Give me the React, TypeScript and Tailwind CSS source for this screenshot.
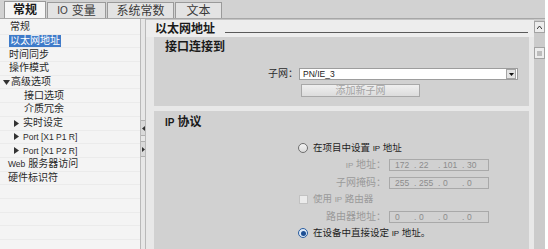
import React from "react";

type Row = {
  text: React.ReactNode;
  pad: string;
  arrow?: "down" | "right";
  selected?: boolean;
};

const rows: Row[] = [
  { text: "常规", pad: "pl-[10px]" },
  { text: "以太网地址", pad: "pl-[9px]", selected: true },
  { text: "时间同步", pad: "pl-[9px]" },
  { text: "操作模式", pad: "pl-[9px]" },
  { text: "高级选项", pad: "pl-[3px]", arrow: "down" },
  { text: "接口选项", pad: "pl-[24px]" },
  { text: "介质冗余", pad: "pl-[24px]" },
  { text: "实时设定", pad: "pl-[14px]", arrow: "right" },
  { text: <span className="text-[8.5px]">Port [X1 P1 R]</span>, pad: "pl-[14px]", arrow: "right" },
  { text: <span className="text-[8.5px]">Port [X1 P2 R]</span>, pad: "pl-[14px]", arrow: "right" },
  {
    text: (
      <>
        <span className="text-[8.5px] mr-[3px]">Web</span>服务器访问
      </>
    ),
    pad: "pl-[8px]",
  },
  { text: "硬件标识符", pad: "pl-[8px]" },
];

function Arrow({ dir }: { dir: "down" | "right" }) {
  if (dir === "down") {
    return (
      <svg width="7" height="5" viewBox="0 0 7 5" className="mr-[1px] shrink-0">
        <path d="M0 0 L7 0 L3.5 5 Z" fill="#333" />
      </svg>
    );
  }
  return (
    <svg width="5" height="7" viewBox="0 0 5 7" className="mr-[4px] shrink-0">
      <path d="M0 0 L5 3.5 L0 7 Z" fill="#333" />
    </svg>
  );
}

function Tabs() {
  const tabs = [
    { label: "常规", w: "w-[42px]", active: true },
    {
      label: (
        <>
          <span className="text-[10px] mr-[4px]">IO</span>变量
        </>
      ),
      w: "w-[59px]",
    },
    { label: "系统常数", w: "w-[67px]" },
    { label: "文本", w: "w-[47px]" },
  ];
  return (
    <div className="h-[19px] bg-[#d2d2d2] border-b border-[#a7a7a7] flex items-end pl-[4px] gap-[1px]">
      {tabs.map((t, i) => (
        <div
          key={i}
          className={`${t.w} flex items-center justify-center border border-b-0 border-[#9a9a9a] text-[12px] leading-none ${
            t.active
              ? "h-[17px] bg-[#f6f6f6] font-bold text-[#1a1a1a]"
              : "h-[16px] bg-[#e3e3e3] text-[#3a3a3a]"
          }`}
        >
          {t.label}
        </div>
      ))}
    </div>
  );
}

function Tree() {
  return (
    <div className="w-[140px] h-full bg-[#f4f4f4] pt-[2px] overflow-hidden text-[10px] text-[#2a2a2a]">
      {rows.map((r, i) => (
        <div
          key={i}
          className={`h-[13.7px] flex items-center border-b border-[#ebebeb] ${r.pad}`}
        >
          {r.arrow && <Arrow dir={r.arrow} />}
          <span
            className={`leading-[10px] ${
              r.selected ? "bg-[#3f7bc9] text-white px-[1px] py-[1px]" : ""
            }`}
          >
            {r.text}
          </span>
        </div>
      ))}
      {Array.from({ length: 6 }).map((_, i) => (
        <div key={"e" + i} className="h-[13.7px] border-b border-[#ebebeb]" />
      ))}
    </div>
  );
}

function Splitter() {
  return (
    <div className="w-[6px] h-full bg-[#e7e7e7] border-x border-[#b9b9b9] flex flex-col">
      <div className="h-[101px]" />
      <div className="h-[16px] bg-[#d9d9d9] border-y border-[#b0b0b0] flex items-center justify-center">
        <svg width="3" height="5" viewBox="0 0 3 5">
          <path d="M3 0 L0 2.5 L3 5 Z" fill="#333" />
        </svg>
      </div>
      <div className="h-[5px]" />
      <div className="h-[16px] bg-[#d9d9d9] border-y border-[#b0b0b0] flex items-center justify-center">
        <svg width="3" height="5" viewBox="0 0 3 5">
          <path d="M0 0 L3 2.5 L0 5 Z" fill="#333" />
        </svg>
      </div>
    </div>
  );
}

function IpField({ parts }: { parts: string[] }) {
  return (
    <div className="ml-[3px] w-[100px] h-[12px] border border-[#a9a9a9] flex items-center pl-[5px] text-[8.5px] text-[#8c8c8c]">
      {parts.map((p, i) => (
        <React.Fragment key={i}>
          <span className="w-[19px]">{p}</span>
          {i < 3 && <span className="w-[5px]">.</span>}
        </React.Fragment>
      ))}
    </div>
  );
}

function FieldRow({ label, parts, mt }: { label: React.ReactNode; parts: string[]; mt: string }) {
  return (
    <div className={`${mt} flex items-center h-[12px]`}>
      <div className="w-[88px] text-right text-[10px] leading-none text-[#9a9a9a]">{label}</div>
      <IpField parts={parts} />
    </div>
  );
}

function Content() {
  return (
    <div className="flex-1 h-full bg-[#e8e8e8] flex flex-col">
      {/* heading row */}
      <div className="h-[18px] bg-[#ededed] border-t border-[#c4c4c4] flex items-center pl-[9px] pr-[6px]">
        <span className="text-[12px] font-bold leading-none text-[#1a1a1a]">以太网地址</span>
        <div className="flex-1 ml-[10px] mt-[7px] h-[1px] bg-[#5a5a5a]" />
      </div>

      <div className="flex-1 flex flex-col pl-[8px] pr-[5px]">
        {/* section 1 */}
        <div className="h-[69px] bg-[#d1d1d1] pt-[3px] flex flex-col">
          <div className="h-[14px] pl-[11px] text-[12px] font-bold leading-[14px] text-[#1a1a1a]">
            接口连接到
          </div>
          <div className="mt-[14px] flex items-center h-[12px]">
            <div className="w-[145px] text-right text-[10px] leading-none text-[#2a2a2a] pr-[1px]">
              子网：
            </div>
            <div className="w-[219px] h-[12px] bg-white border border-[#9d9d9d] flex items-center">
              <span className="flex-1 pl-[3px] text-[8.5px] leading-none text-[#222]">PN/IE_3</span>
              <div className="w-[10px] h-[10px] mr-[1px] bg-[#e3e3e3] border border-[#a5a5a5] flex items-center justify-center">
                <svg width="5" height="3" viewBox="0 0 5 3">
                  <path d="M0 0 L5 0 L2.5 3 Z" fill="#111" />
                </svg>
              </div>
            </div>
          </div>
          <div className="mt-[4px] ml-[147px] w-[119px] h-[13px] border border-[#a8a8a8] bg-gradient-to-b from-[#efefef] to-[#dcdcdc] flex items-center justify-center text-[10px] leading-none text-[#a3a3a3]">
            添加新子网
          </div>
        </div>

        <div className="h-[5px]" />

        {/* section 2 */}
        <div className="flex-1 bg-[#d1d1d1] pt-[4px] flex flex-col">
          <div className="h-[14px] pl-[11px] text-[12px] font-bold leading-[14px] text-[#1a1a1a]">
            <span className="text-[10px] mr-[3px]">IP</span>协议
          </div>
          <div className="pl-[144px] flex flex-col">
            <div className="mt-[13px] h-[12px] flex items-center">
              <div className="w-[10px] h-[10px] rounded-full border border-[#6f6f6f] bg-gradient-to-b from-[#f4f4f4] to-[#dadada]" />
              <span className="ml-[5px] text-[9.5px] leading-none text-[#1e1e1e]">
                在项目中设置 <span className="text-[8px]">IP</span> 地址
              </span>
            </div>
            <FieldRow
              mt="mt-[5px]"
              label={<><span className="text-[8px]">IP</span> 地址：</>}
              parts={["172", "22", "101", "30"]}
            />
            <FieldRow mt="mt-[6px]" label="子网掩码：" parts={["255", "255", "0", "0"]} />
            <div className="mt-[4px] h-[12px] flex items-center pl-[1px]">
              <div className="w-[9px] h-[9px] bg-[#ebebeb] border border-[#c2c2c2]" />
              <span className="ml-[5px] text-[9.5px] leading-none text-[#9a9a9a]">
                使用 <span className="text-[8px]">IP</span> 路由器
              </span>
            </div>
            <FieldRow mt="mt-[6px]" label="路由器地址：" parts={["0", "0", "0", "0"]} />
            <div className="mt-[4px] h-[12px] flex items-center">
              <div className="w-[10px] h-[10px] rounded-full border border-[#2a5d9e] bg-[#dbe8f7] flex items-center justify-center">
                <div className="w-[5px] h-[5px] rounded-full bg-[#1d4f94]" />
              </div>
              <span className="ml-[5px] text-[9.5px] leading-none text-[#1e1e1e]">
                在设备中直接设定 <span className="text-[8px]">IP</span> 地址。
              </span>
            </div>
          </div>
        </div>
      </div>
    </div>
  );
}

function Scrollbar() {
  return (
    <div className="w-[11px] h-full bg-[#cbcbcb] flex flex-col">
      <div className="mt-[2px] h-[12px] bg-[#ececec] border border-[#a3a3a3] flex items-center justify-center">
        <svg width="5" height="3" viewBox="0 0 5 3">
          <path d="M0 3 L2.5 0 L5 3" fill="none" stroke="#333" strokeWidth="1" />
        </svg>
      </div>
      <div className="mt-[14px] h-[12px] bg-[#ececec] border border-[#a3a3a3] flex items-center justify-center">
        <div className="w-[5px] h-[5px] bg-[#bdbdbd]" />
      </div>
    </div>
  );
}

export default function App() {
  return (
    <div className="w-[548px] h-[249px] bg-white overflow-hidden font-['Liberation_Sans','Noto_Sans_CJK_SC',sans-serif]">
      <div className="w-[545px] h-full flex flex-col">
        <Tabs />
        <div className="flex-1 flex min-h-0">
          <Tree />
          <Splitter />
          <Content />
          <Scrollbar />
        </div>
      </div>
    </div>
  );
}
